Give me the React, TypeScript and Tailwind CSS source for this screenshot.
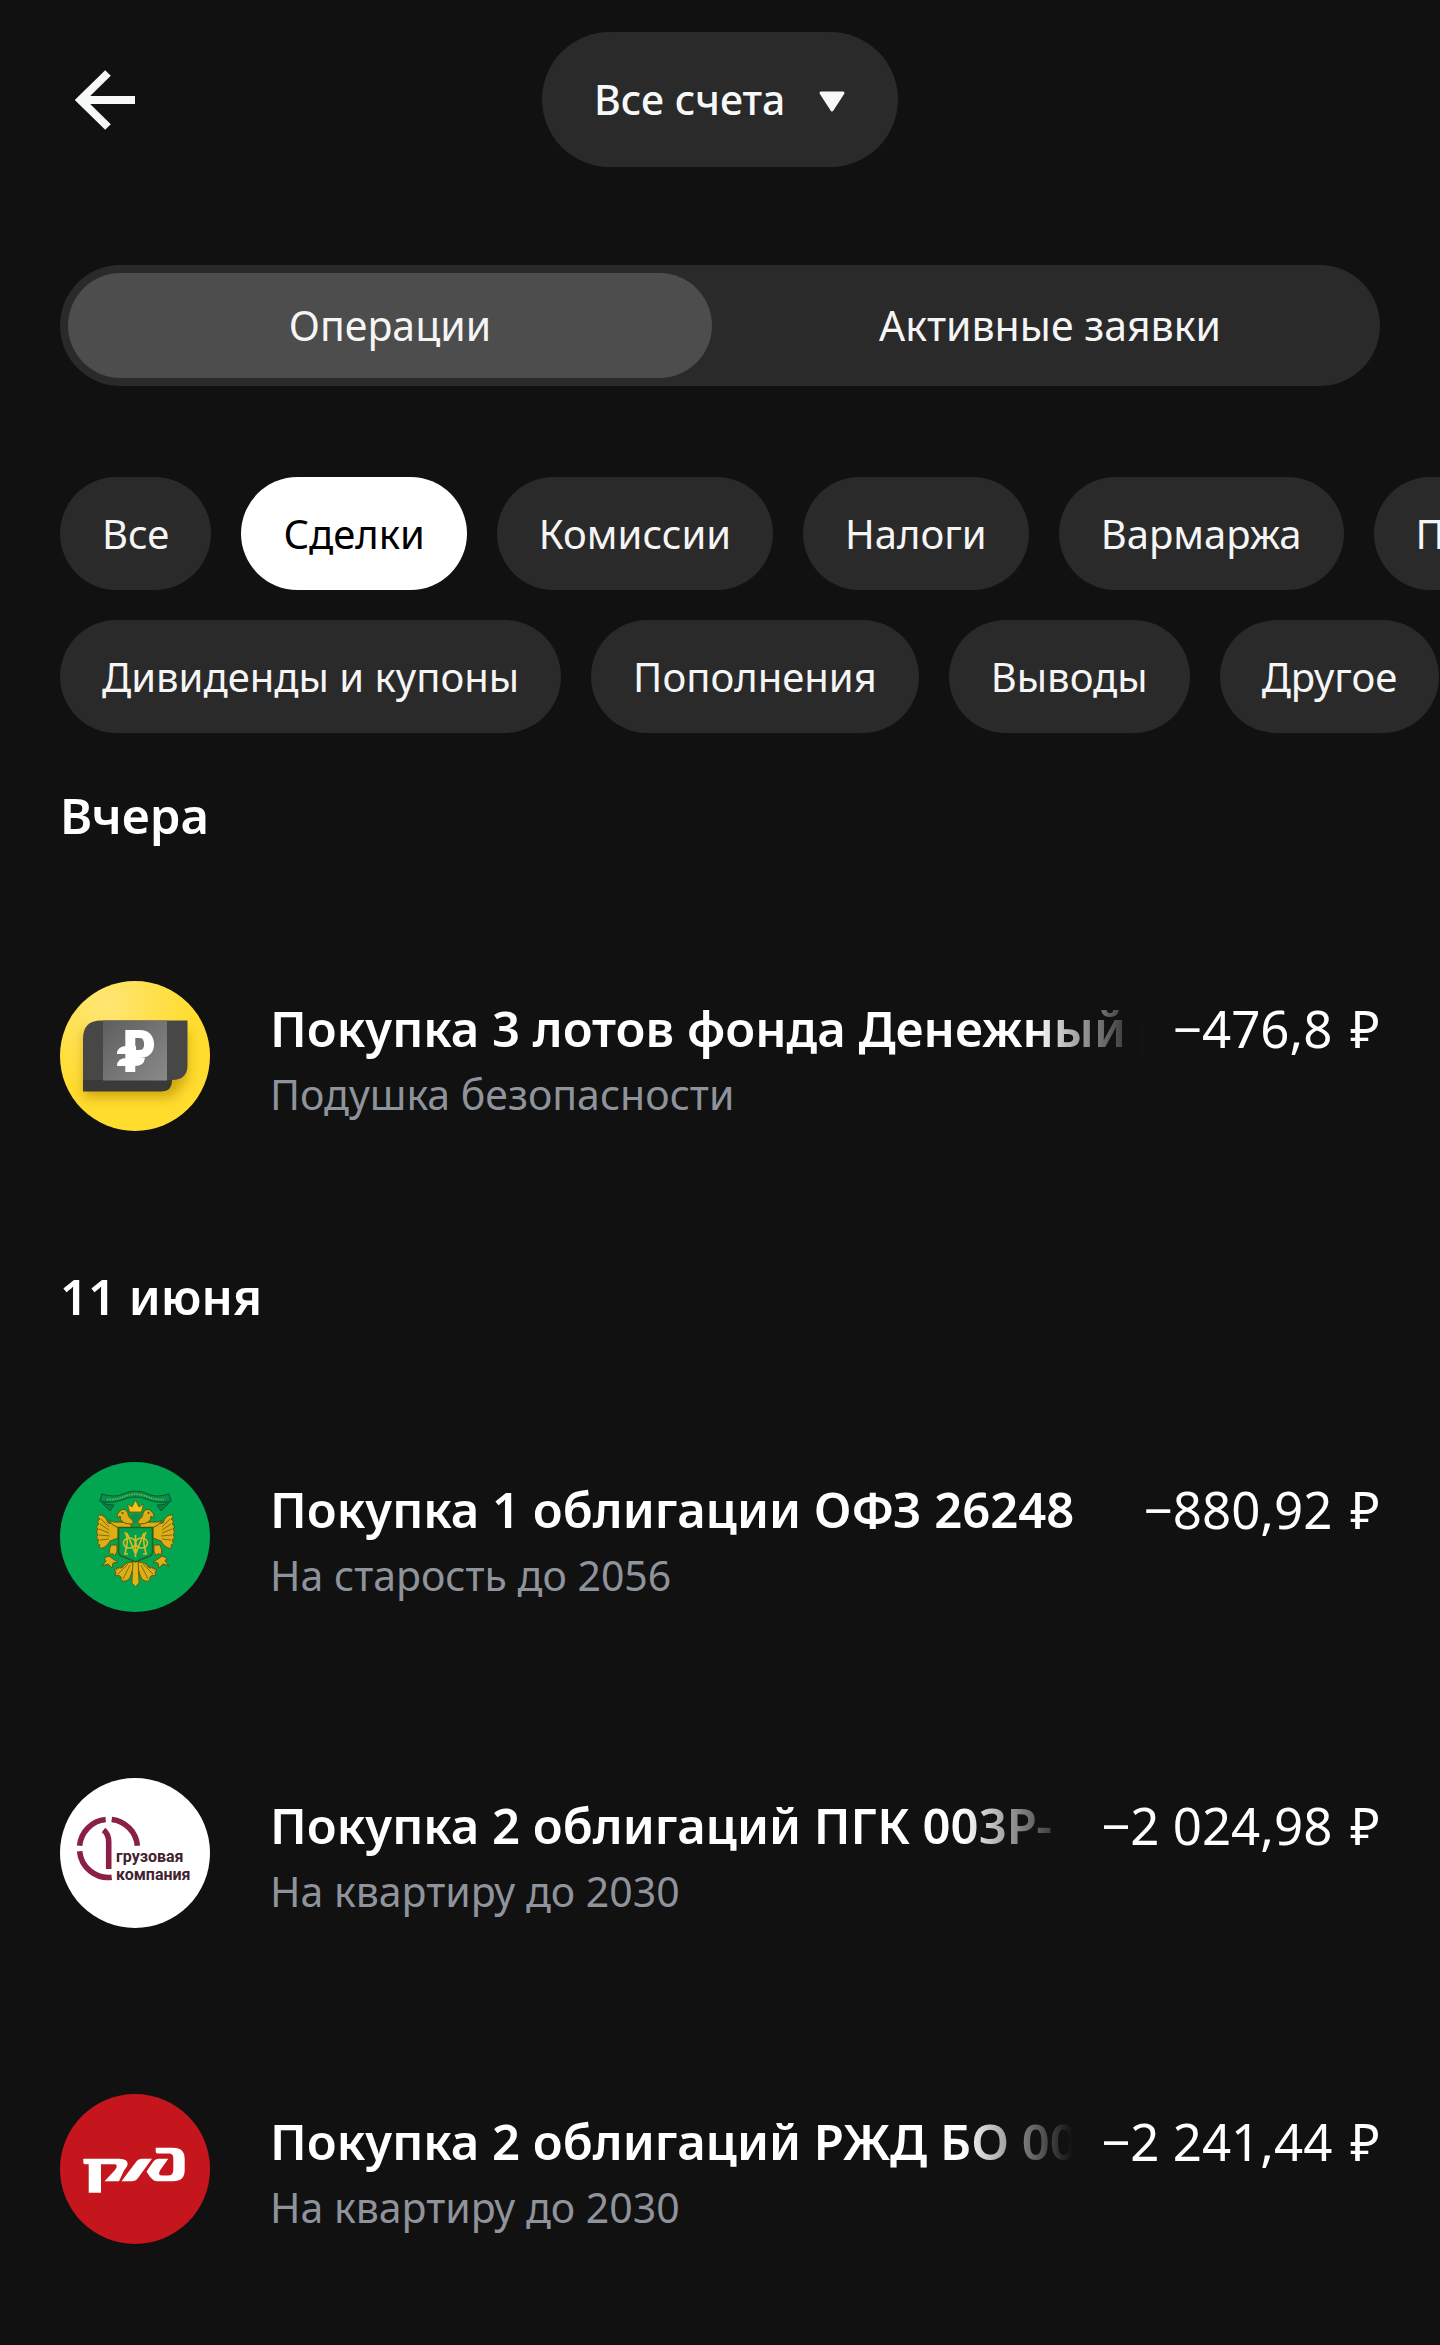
import { useState, type ReactNode } from 'react';

interface Operation {
  id: number;
  title: string;
  account: string;
  amount: string;
  logo: ReactNode;
  clipped?: boolean;
}

interface OperationGroup {
  date: string;
  items: Operation[];
}

const filterRows = [
  ['Все', 'Сделки', 'Комиссии', 'Налоги', 'Вармаржа', 'Переводы'],
  ['Дивиденды и купоны', 'Пополнения', 'Выводы', 'Другое'],
];

function MoneyFundLogo() {
  return (
    <svg viewBox="0 0 150 150" className="size-full" aria-hidden="true">
      <defs>
        <radialGradient id="fund-bg" cx="0.3" cy="0.15" r="0.6">
          <stop offset="0" stopColor="#ffe675" />
          <stop offset="1" stopColor="#ffdc2e" />
        </radialGradient>
        <linearGradient id="fund-card" x1="0" y1="0" x2="1" y2="1">
          <stop offset="0" stopColor="#5e5e5e" />
          <stop offset="1" stopColor="#8a8a8a" />
        </linearGradient>
        <filter id="fund-shadow" x="-30%" y="-30%" width="160%" height="180%">
          <feGaussianBlur stdDeviation="6" />
        </filter>
      </defs>
      <rect width="150" height="150" fill="url(#fund-bg)" />
      <path d="M24 50H127V98L112 116H24Z" fill="#b58a00" opacity="0.65" filter="url(#fund-shadow)" />
      <path d="M23 95H112V99Q112 110.500 101 110.500H23Z" fill="#3a3a38" />
      <path d="M23 58Q23 39.500 41 39.500H127.500V84Q127.500 99 112 99H23Z" fill="#474745" />
      <rect x="43" y="39.500" width="64" height="60" fill="url(#fund-card)" />
      <text x="62.500" y="91" fontSize="59" fontWeight="900" fill="#fff" fontFamily="'Roboto Condensed', Roboto, sans-serif">P</text>
      <path d="M57 73Q57 65 67 65H76V73Z" fill="#fff" />
      <path d="M57 85Q57 77 67 77H85Q84 85 75 85Z" fill="#fff" />
    </svg>
  );
}

function EagleHalf() {
  return (
    <g stroke="#5d5a10" strokeWidth="1" strokeLinejoin="round">
      <g fill="#dfae16">
        <path d="M58 62L48 61Q45 52 39 53Q36 55 40 57Q36 59 39 62Q35 64 38 67Q35 70 38 73Q35 76 39 78Q36 82 40 83Q38 87 43 86Q48 84 50 79L58 76Z" />
        <path d="M59 66Q52 64 49 58Q53 61 59 60L71 61V66Z" />
        <path d="M71 62Q60 62 60 54L57 56Q56 52 61 48Q66 46 68 51Q68 56 73 58V62Z" />
        <path d="M51 83Q48 88 50 93Q53 90 55 94Q58 90 57 83Z" />
        <path d="M49 94L44 96L46 99L42 104L48 102L52 106L53 101L58 100L53 97Z" />
        <path d="M73 100Q65 100 62 106Q58 104 54 108Q57 109 55 114Q59 112 61 115Q60 120 66 119Q70 118 71 113L73 106Z" />
      </g>
      <g fill="none" stroke="#7d6d0c">
        <path d="M41 57L49 65M40 62L49 68M39 67L49 71M39 73L50 74M40 78L49 77" />
        <path d="M70 103L63 117M68 102L58 112M66 101L56 108" />
      </g>
      <circle cx="62.500" cy="51" r="1" fill="#12612c" stroke="none" />
      <path d="M43 34L40 38L43 42L50 49L54 43L45 42Z" fill="#0a7f3d" stroke="#0b5c36" />
    </g>
  );
}

function MinistryLogo() {
  return (
    <svg viewBox="0 0 150 150" className="size-full" aria-hidden="true">
      <rect width="150" height="150" fill="#02a651" />
      <EagleHalf />
      <g transform="translate(151 0) scale(-1 1)">
        <EagleHalf />
      </g>
      <path d="M42 32Q55 36 63 32Q75.500 26 88 32Q96 36 109 32L111 39Q100 42 89 38Q75.500 32 62 38Q51 42 40 39Z" fill="#04924a" stroke="#0b5c36" strokeWidth="1.200" />
      <path d="M47 37.500Q56 38 63 35Q75.500 29.500 88 35Q95 38 104 37.500" fill="none" stroke="#75b83a" strokeWidth="1.600" strokeDasharray="1.500 1" />
      <path d="M69.500 50L67.500 42L72 45L75.500 38L79 45L83.500 42L81.500 50Z" fill="#f3c318" stroke="#5d5a10" strokeWidth="0.800" />
      <path d="M71 52H80V56Q79 60 75.500 61Q72 60 71 56Z" fill="#06924a" stroke="#75730f" strokeWidth="0.800" />
      <path d="M73 99H78L79 121L75.500 124.500L72 121Z" fill="#e3b316" stroke="#5d5a10" strokeWidth="0.800" />
      <path d="M58.500 65.500H92.500V90Q92.500 94 87 95L75.500 100L64 95Q58.500 94 58.500 90Z" fill="#03a04e" stroke="#2f5d18" strokeWidth="1.500" />
      <g fill="none" stroke="#d9bb22" strokeWidth="1.600">
        <path d="M65 70Q68 76 67 82L65 92M86 70Q83 76 84 82L86 92M67 71L75.500 92L84 71M75.500 73V95M64 92H68M83 92H87" />
        <ellipse cx="69.500" cy="81" rx="6" ry="5" />
        <ellipse cx="81.500" cy="81" rx="6" ry="5" />
      </g>
    </svg>
  );
}

function CargoLogo() {
  return (
    <svg viewBox="0 0 150 150" className="size-full" aria-hidden="true">
      <rect width="150" height="150" fill="#fff" />
      <g fill="none" stroke="#8a1f47" strokeWidth="5.600">
        <path d="M19.600 67.800A29 29 0 0 1 45.700 41.500" />
        <path d="M51.700 41.500A29 29 0 0 1 77.400 67.800" />
        <path d="M19.600 73.200A29 29 0 0 0 51.700 99.300" />
        <path d="M43.500 52Q48.700 56 48.700 64V91" />
      </g>
      <g fill="#42222f" fontFamily="Roboto, sans-serif" fontWeight="700" fontSize="16">
        <text x="56" y="84">грузовая</text>
        <text x="56" y="102">компания</text>
      </g>
    </svg>
  );
}

function RailwaysLogo() {
  return (
    <svg viewBox="0 0 150 150" className="size-full" aria-hidden="true">
      <rect width="150" height="150" fill="#c4161c" />
      <g fill="#fff">
        <path d="M23.300 64.700H59Q69 65 67.500 71Q67 73 64 76.500L59 87.300H44.500L55 76Q59 70.300 54 70.300H41V98.700H28.700V70.300H25Q23.300 70.300 23.300 68Z" />
        <path d="M61.500 87.300L76 68Q78.500 64.700 82 64.700H92L78 84Q75.500 87.300 72 87.300Z" />
        <path d="M95.700 53.700H113Q124.700 53.700 124.700 65V76Q124.700 87.300 113 87.300H97Q92 87.300 86.500 77.500L93 68Q95.500 64.700 99 64.700H108.300L100 76.500Q97.500 81.500 102 81.500H108Q113.300 81.500 113.300 76V64Q113.300 59.500 109 59.500H97.500Q95.700 59.500 95.700 57.500Z" />
      </g>
    </svg>
  );
}

const groups: OperationGroup[] = [
  {
    date: 'Вчера',
    items: [
      { id: 1, title: 'Покупка 3 лотов фонда Денежный р', account: 'Подушка безопасности', amount: '−476,8', logo: <MoneyFundLogo />, clipped: true },
    ],
  },
  {
    date: '11 июня',
    items: [
      { id: 2, title: 'Покупка 1 облигации ОФЗ 26248', account: 'На старость до 2056', amount: '−880,92', logo: <MinistryLogo /> },
      { id: 3, title: 'Покупка 2 облигаций ПГК 003Р-', account: 'На квартиру до 2030', amount: '−2 024,98', logo: <CargoLogo />, clipped: true },
      { id: 4, title: 'Покупка 2 облигаций РЖД БО 00', account: 'На квартиру до 2030', amount: '−2 241,44', logo: <RailwaysLogo />, clipped: true },
    ],
  },
];

function Header() {
  return (
    <header className="grid grid-cols-[1fr_auto_1fr] items-center px-[60px] pt-8">
      <button type="button" aria-label="Назад" className="flex size-[90px] items-center justify-center justify-self-start">
        <svg viewBox="0 0 60 60" className="size-[60px]" fill="none" stroke="#f7f8f8" strokeWidth="8" aria-hidden="true">
          <path d="M60 30H5M33 3L5.500 30L33 57" />
        </svg>
      </button>
      <div className="relative">
        <select
          aria-label="Счёт"
          className="h-[135px] cursor-pointer appearance-none rounded-full bg-[#2a2a2a] pr-[112px] pl-[52px] text-[41px] font-medium text-[#f7f8f8] focus:outline-none"
        >
          <option>Все счета</option>
        </select>
        <svg viewBox="0 0 28 22" className="pointer-events-none absolute top-[59px] right-[52px] h-[22px] w-[28px]" aria-hidden="true">
          <path d="M3 2H25L14 19Z" fill="#f7f8f8" stroke="#f7f8f8" strokeWidth="3" strokeLinejoin="round" />
        </svg>
      </div>
    </header>
  );
}

function OperationRow({ operation }: { operation: Operation }) {
  const fade = operation.clipped ? 'mask-[linear-gradient(to_left,transparent,black_110px)]' : '';

  return (
    <li className="flex h-[316px] items-center">
      <div className="size-[150px] shrink-0 overflow-hidden rounded-full">{operation.logo}</div>
      <div className="ml-[60px] min-w-0 flex-1">
        <div className="flex gap-7">
          <p className={`min-w-0 flex-1 overflow-hidden text-[49px] leading-[76px] font-semibold whitespace-nowrap text-white ${fade}`}>
            {operation.title}
          </p>
          <p className="flex gap-[18px] text-[51px] leading-[76px] whitespace-nowrap text-white">
            <span>{operation.amount}</span>
            <span>₽</span>
          </p>
        </div>
        <p className="text-[41px] leading-[56px] text-[#8f939b]">{operation.account}</p>
      </div>
    </li>
  );
}

export default function App() {
  const [tab, setTab] = useState('Операции');
  const [filter, setFilter] = useState('Сделки');

  return (
    <div className="min-h-screen overflow-hidden bg-[#111111] font-['Noto_Sans',sans-serif] text-[#f5f5f5]">
      <Header />

      <div role="tablist" className="mx-[60px] mt-[98px] grid grid-cols-2 gap-4 rounded-full bg-[#2a2a2a] p-2">
        {['Операции', 'Активные заявки'].map((name) => (
          <button
            key={name}
            type="button"
            role="tab"
            aria-selected={tab === name}
            onClick={() => setTab(name)}
            className={`h-[105px] rounded-full text-[41px] ${tab === name ? 'bg-[#4d4d4d]' : ''}`}
          >
            {name}
          </button>
        ))}
      </div>

      <div className="mt-[91px] flex flex-col gap-[30px] overflow-hidden pl-[60px]">
        {filterRows.map((row, i) => (
          <div key={i} className="flex gap-[30px]">
            {row.map((name) => (
              <button
                key={name}
                type="button"
                aria-pressed={filter === name}
                onClick={() => setFilter(name)}
                className={`h-[113px] shrink-0 rounded-full px-[42px] text-[40px] whitespace-nowrap ${
                  filter === name ? 'bg-white text-black' : 'bg-[#2a2a2a]'
                }`}
              >
                {name}
              </button>
            ))}
          </div>
        ))}
      </div>

      <main className="px-[60px]">
        {groups.map((group) => (
          <section key={group.date}>
            <h2 className="flex h-[165px] items-center text-[49px] font-semibold text-white">{group.date}</h2>
            <ul>
              {group.items.map((operation) => (
                <OperationRow key={operation.id} operation={operation} />
              ))}
            </ul>
          </section>
        ))}
      </main>
    </div>
  );
}
